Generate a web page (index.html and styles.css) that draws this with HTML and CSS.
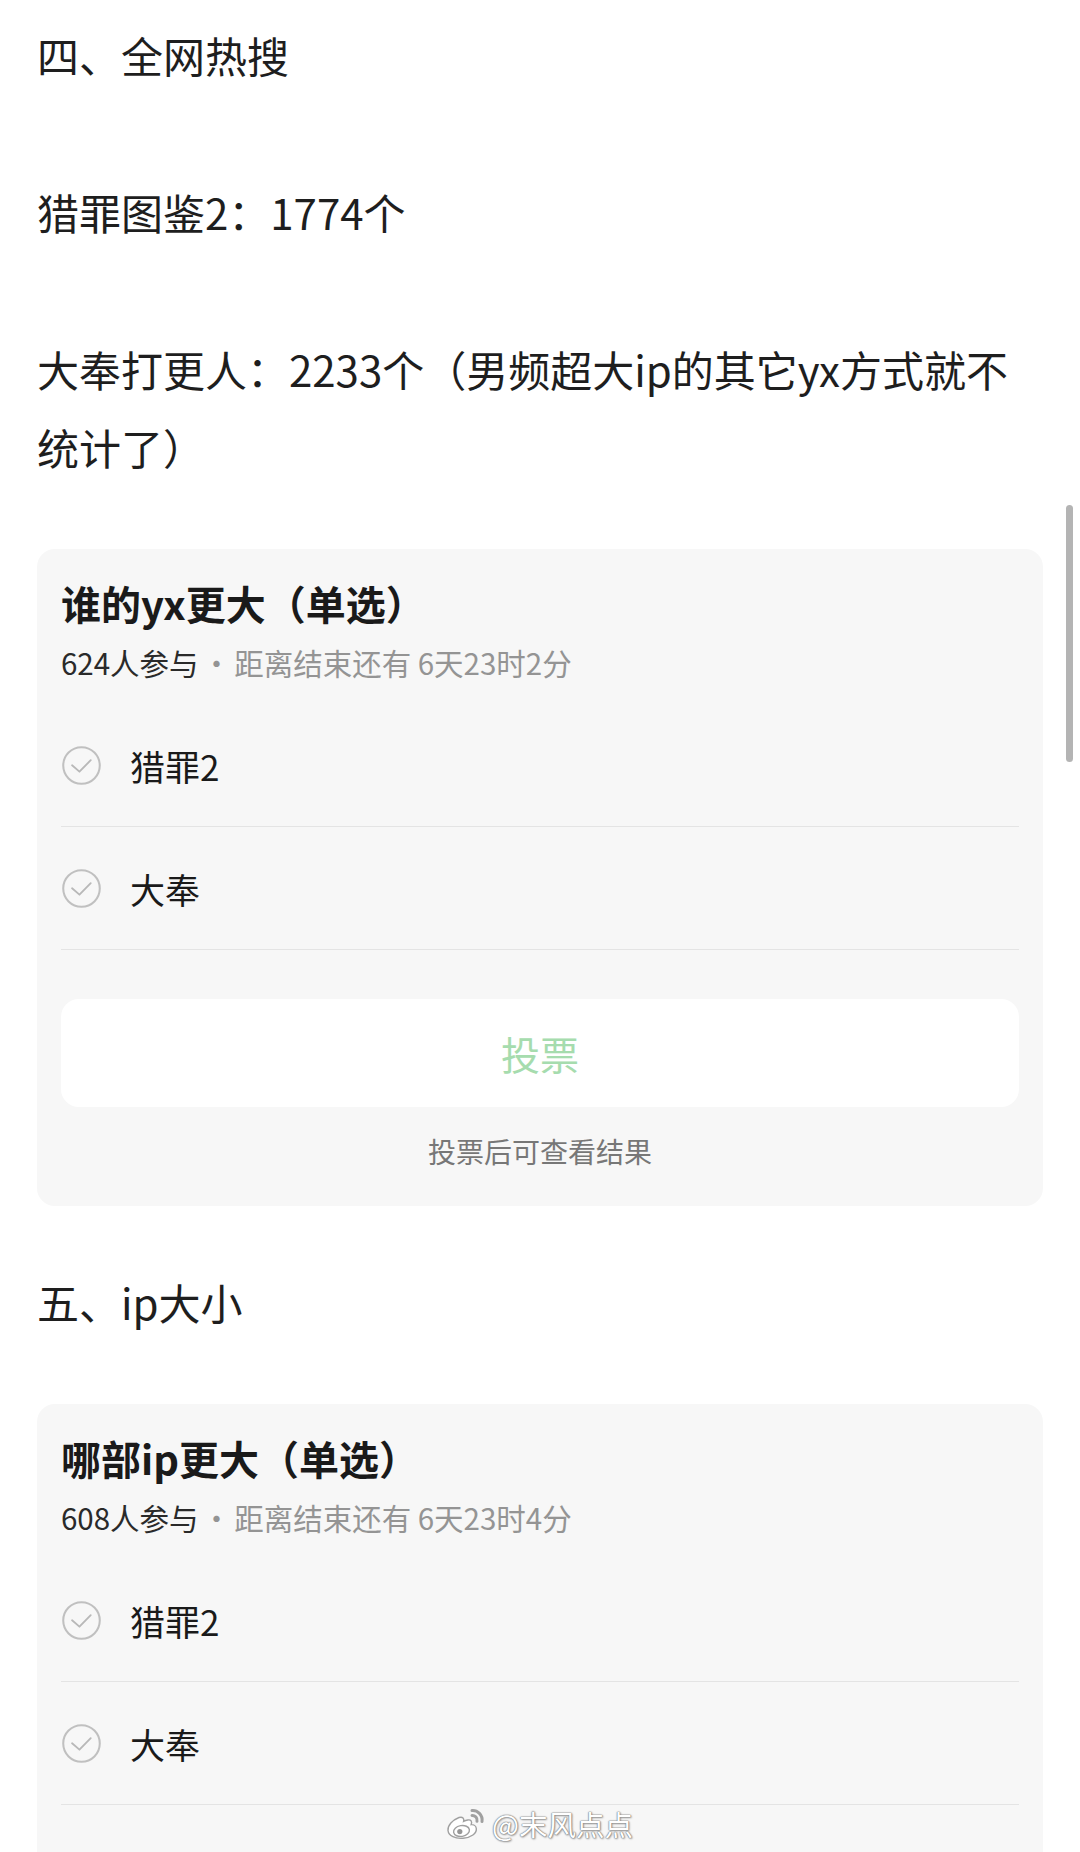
FILE: index.html
```html
<!DOCTYPE html>
<html lang="zh-CN">
<head>
    <meta charset="UTF-8">
    <meta name="viewport" content="width=device-width, initial-scale=1.0">
    <title>全网热搜</title>
    <link rel="stylesheet" href="styles.css">
</head>
<body>
    <div class="screen">
        <p class="text">四、全网热搜</p>
        <p class="text">猎罪图鉴2：1774个</p>
        <p class="text">大奉打更人：2233个（男频超大ip的其它yx方式就不统计了）</p>

        <div class="poll">
            <h2 class="poll-title">谁的yx更大（单选）</h2>
            <div class="poll-meta"><span class="count">624人参与</span><span class="dot">·</span>距离结束还有 6天23时2分</div>
            <ul class="options">
                <li class="option">
                    <svg class="check" viewBox="0 0 38 38"><circle cx="19" cy="19" r="17.8" /><path d="M9.8 18.8 L17 25 L28 13.8" /></svg>
                    <span>猎罪2</span>
                </li>
                <li class="option">
                    <svg class="check" viewBox="0 0 38 38"><circle cx="19" cy="19" r="17.8" /><path d="M9.8 18.8 L17 25 L28 13.8" /></svg>
                    <span>大奉</span>
                </li>
            </ul>
            <button class="vote-btn">投票</button>
            <p class="poll-note">投票后可查看结果</p>
        </div>

        <p class="text">五、ip大小</p>

        <div class="poll poll-cut">
            <h2 class="poll-title">哪部ip更大（单选）</h2>
            <div class="poll-meta"><span class="count">608人参与</span><span class="dot">·</span>距离结束还有 6天23时4分</div>
            <ul class="options">
                <li class="option">
                    <svg class="check" viewBox="0 0 38 38"><circle cx="19" cy="19" r="17.8" /><path d="M9.8 18.8 L17 25 L28 13.8" /></svg>
                    <span>猎罪2</span>
                </li>
                <li class="option">
                    <svg class="check" viewBox="0 0 38 38"><circle cx="19" cy="19" r="17.8" /><path d="M9.8 18.8 L17 25 L28 13.8" /></svg>
                    <span>大奉</span>
                </li>
            </ul>
        </div>

        <div class="scrollbar"></div>

        <div class="watermark">
            <svg class="weibo" viewBox="0 0 40 32">
                <path class="weibo-body" d="M13 9.5 C6.5 12 1.5 17.5 2 22.5 C2.6 28 9.5 31 17 30.3 C25 29.5 31 25.5 30.3 20.5 C30 17.8 27.6 16.4 25.2 16.6 C26.3 13.6 25 11.4 21.8 12 C19.6 12.4 17.6 13.4 17.6 13.4 C18.4 10.4 16.8 8.4 13 9.5 Z" />
                <ellipse class="weibo-eye" cx="15.5" cy="23" rx="8" ry="5.4" transform="rotate(-10 15.5 23)" />
                <circle class="weibo-pupil" cx="13.8" cy="23.6" r="2.6" />
                <path class="weibo-wave" d="M26 2.5 C31.5 2 37 7 36 13.5" />
                <path class="weibo-wave" d="M26 7.5 C29.2 7.4 31.6 10 31 13.2" />
            </svg>
            <span>@末风点点</span>
        </div>
    </div>
</body>
</html>
```

FILE: styles.css
```css
*{
    margin:0;
    padding:0;
    box-sizing:border-box;
}
body{
    background-color:#fff;
    font-family:"Noto Sans CJK SC","Noto Sans",sans-serif;
    color:#1e1e1e;
}
.screen{
    position:relative;
    height:1852px;
    overflow:hidden;
    padding:16px 37px 0;
}
.text{
    font-size:42px;
    line-height:78px;
    padding-right:16px;
}
.text + .text{
    margin-top:79px;
}
.poll{
    background-color:#f7f7f7;
    border-radius:18px;
    margin:63px 0 57px;
    padding:26px 24px 35px;
}
.poll-cut{
    padding-bottom:80px;
}
.poll-title{
    font-size:40px;
    font-weight:bold;
    line-height:56px;
    color:#1a1a1a;
}
.poll-meta{
    font-size:29.5px;
    line-height:40px;
    margin-top:11px;
    color:#949494;
}
.poll-meta .count{
    color:#2a2a2a;
}
.poll-meta .dot{
    margin:0 3px;
}
.options{
    list-style:none;
    margin-top:22px;
}
.option{
    height:123px;
    display:flex;
    align-items:center;
    gap:29px;
    border-bottom:1px solid #e4e4e4;
    font-size:35px;
    line-height:1;
    color:#1a1a1a;
    padding-left:1px;
}
.check{
    width:39px;
    height:39px;
    flex-shrink:0;
    fill:none;
    stroke:#c0c0c0;
    stroke-width:2;
}
.check path{
    stroke:#b8b8b8;
    stroke-width:1.8;
    stroke-linecap:round;
    stroke-linejoin:round;
}
.vote-btn{
    display:block;
    width:100%;
    height:108px;
    margin-top:49px;
    background-color:#fff;
    border:none;
    border-radius:18px;
    font-family:inherit;
    font-size:39px;
    color:#a6dcae;
}
.poll-note{
    text-align:center;
    font-size:28px;
    line-height:40px;
    margin-top:24px;
    color:#777;
}
.scrollbar{
    position:absolute;
    top:505px;
    right:7px;
    width:7px;
    height:257px;
    border-radius:4px;
    background-color:#b4b4b4;
}
.watermark{
    position:absolute;
    left:446px;
    top:1806px;
    display:flex;
    align-items:center;
    gap:6px;
    font-size:28.5px;
    line-height:36px;
    color:#fff;
    text-shadow:0 0 1px #7a7a7a, 0 0 1px #7a7a7a, 0 0 2px #9a9a9a, 1px 1px 2px rgba(0,0,0,0.35);
}
.weibo{
    width:40px;
    height:32px;
}
.weibo-body,
.weibo-eye{
    fill:#fff;
    stroke:#a0a0a0;
    stroke-width:1.4;
}
.weibo-pupil{
    fill:#969696;
}
.weibo-wave{
    fill:none;
    stroke:#a0a0a0;
    stroke-width:3;
    stroke-linecap:round;
}
```
